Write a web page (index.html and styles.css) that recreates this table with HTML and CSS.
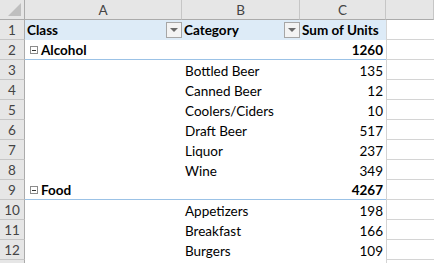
FILE: index.html
```html
<!DOCTYPE html>
<html lang="en">
<head>
  <meta charset="UTF-8">
  <title>Pivot - Sum of Units</title>
  <link rel="stylesheet" href="styles.css">
</head>
<body>
  <div class="sheet">
    <div class="row col-heads">
      <div class="corner"><span class="corner-mark"></span></div>
      <div class="ch">A</div>
      <div class="ch">B</div>
      <div class="ch">C</div>
      <div class="ch"></div>
    </div>

    <div class="row pivot-head">
      <div class="rh">1</div>
      <div class="cell hd">Class <span class="dd"></span></div>
      <div class="cell hd">Category <span class="dd"></span></div>
      <div class="cell hd">Sum of Units</div>
      <div class="cell blank"></div>
    </div>

    <div class="row group">
      <div class="rh">2</div>
      <div class="cell"><span class="toggle"></span>Alcohol</div>
      <div class="cell"></div>
      <div class="cell num">1260</div>
      <div class="cell blank"></div>
    </div>
    <div class="row item"><div class="rh">3</div><div class="cell"></div><div class="cell">Bottled Beer</div><div class="cell num">135</div><div class="cell blank"></div></div>
    <div class="row item"><div class="rh">4</div><div class="cell"></div><div class="cell">Canned Beer</div><div class="cell num">12</div><div class="cell blank"></div></div>
    <div class="row item"><div class="rh">5</div><div class="cell"></div><div class="cell">Coolers/Ciders</div><div class="cell num">10</div><div class="cell blank"></div></div>
    <div class="row item"><div class="rh">6</div><div class="cell"></div><div class="cell">Draft Beer</div><div class="cell num">517</div><div class="cell blank"></div></div>
    <div class="row item"><div class="rh">7</div><div class="cell"></div><div class="cell">Liquor</div><div class="cell num">237</div><div class="cell blank"></div></div>
    <div class="row item"><div class="rh">8</div><div class="cell"></div><div class="cell">Wine</div><div class="cell num">349</div><div class="cell blank"></div></div>

    <div class="row group">
      <div class="rh">9</div>
      <div class="cell"><span class="toggle"></span>Food</div>
      <div class="cell"></div>
      <div class="cell num">4267</div>
      <div class="cell blank"></div>
    </div>
    <div class="row item"><div class="rh">10</div><div class="cell"></div><div class="cell">Appetizers</div><div class="cell num">198</div><div class="cell blank"></div></div>
    <div class="row item"><div class="rh">11</div><div class="cell"></div><div class="cell">Breakfast</div><div class="cell num">166</div><div class="cell blank"></div></div>
    <div class="row item"><div class="rh">12</div><div class="cell"></div><div class="cell">Burgers</div><div class="cell num">109</div><div class="cell blank"></div></div>
    <!-- next row only peeks in at the bottom edge -->
    <div class="row item"><div class="rh"></div><div class="cell"></div><div class="cell"></div><div class="cell"></div><div class="cell blank"></div></div>
  </div>
</body>
</html>
```

FILE: styles.css
```css
* {
  margin: 0;
  padding: 0;
  box-sizing: border-box;
}

body {
  font-family: Lato, 'Open Sans', sans-serif;
  font-size: 13.5px;
  color: #000;
  background: #fff;
  overflow: hidden;
}

.sheet {
  width: 434px;
}

.row {
  display: grid;
  grid-template-columns: 25px 157px 118px 86px 1fr;
  height: 20px;
}

/* column letters */
.col-heads {
  background: #e6e6e6;
}

.ch {
  display: flex;
  align-items: center;
  justify-content: center;
  border-right: 1px solid #c6c6c6;
  border-bottom: 1px solid #ababab;
  color: #444;
}

.corner {
  display: flex;
  align-items: flex-end;
  justify-content: flex-end;
  padding: 0 3px 3px 0;
  border-right: 1px solid #ababab;
  border-bottom: 1px solid #ababab;
}

.corner-mark {
  width: 0;
  height: 0;
  border-left: 13px solid transparent;
  border-bottom: 13px solid #bfbfbf;
}

/* row numbers */
.rh {
  display: flex;
  align-items: center;
  justify-content: center;
  background: #e6e6e6;
  border-right: 1px solid #ababab;
  border-bottom: 1px solid #c6c6c6;
  color: #444;
}

.cell {
  display: flex;
  align-items: center;
  padding: 1px 3px 0;
  white-space: nowrap;
  overflow: hidden;
}

.cell.num {
  justify-content: flex-end;
}

.cell.blank {
  border-left: 1px solid #d4d4d4;
  border-bottom: 1px solid #d4d4d4;
}

/* pivot header row */
.pivot-head .hd {
  background: #ddebf7;
  font-weight: bold;
  justify-content: space-between;
  padding: 0 0 0 2px;
}

.pivot-head .hd:nth-child(4) {
  padding-left: 2px;
}

.dd {
  width: 16px;
  height: 16px;
  border: 1px solid #a6a6a6;
  background: #f3f3f3;
  display: flex;
  align-items: center;
  justify-content: center;
}

.dd::after {
  content: "";
  border-left: 4px solid transparent;
  border-right: 4px solid transparent;
  border-top: 4px solid #6a6a6a;
}

/* group rows: bold label with collapse box and blue rule */
.group .cell:not(.blank) {
  font-weight: bold;
  border-bottom: 1px solid #9bc2e6;
}

.toggle {
  width: 8px;
  height: 8px;
  border: 1px solid #8c8c8c;
  margin: 0 3px 0 2px;
  display: flex;
  align-items: center;
  justify-content: center;
}

.toggle::after {
  content: "";
  width: 4px;
  height: 1px;
  background: #333;
}
```
